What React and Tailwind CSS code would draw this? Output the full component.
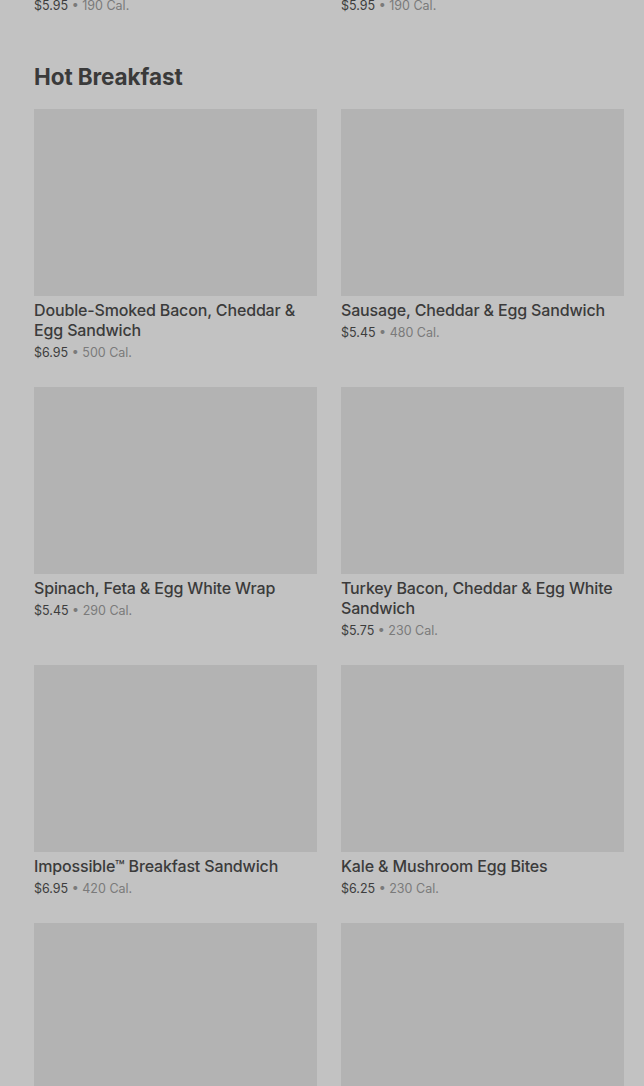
import React from "react";

const items = [
    { name: "Double-Smoked Bacon, Cheddar & Egg Sandwich", price: "$6.95", cal: "500 Cal." },
    { name: "Sausage, Cheddar & Egg Sandwich", price: "$5.45", cal: "480 Cal." },
    { name: "Spinach, Feta & Egg White Wrap", price: "$5.45", cal: "290 Cal." },
    { name: "Turkey Bacon, Cheddar & Egg White Sandwich", price: "$5.75", cal: "230 Cal." },
    { name: "Impossible™ Breakfast Sandwich", price: "$6.95", cal: "420 Cal." },
    { name: "Kale & Mushroom Egg Bites", price: "$6.25", cal: "230 Cal." },
    { name: "Bacon & Gruyère Egg Bites", price: "$5.45", cal: "300 Cal." },
    { name: "Egg White & Roasted Red Pepper Egg Bites", price: "$4.95", cal: "170 Cal." },
];

function Price({ price, cal }) {
    return (
        <div className="mt-[2px] text-[12.5px] leading-[21px]">
            <span className="text-[#3d3d3d]">{price}</span>
            <span className="text-[#7a7a7a]"> • {cal}</span>
        </div>
    );
}

function Card({ item }) {
    return (
        <div className="flex flex-col">
            <div className="h-[187px] bg-[#b3b3b3]" />
            <div className="mt-[4px] text-[16px] leading-[20px] font-medium tracking-[-0.15px] text-[#3b3b3b]">{item.name}</div>
            <Price price={item.price} cal={item.cal} />
        </div>
    );
}

export default function App() {
    return (
        <div className="h-[1086px] overflow-hidden bg-[#c2c2c2] pl-[34px] pr-[20px]" style={{ fontFamily: "Inter, 'Noto Sans', sans-serif" }}>
            <div className="mt-[-7px] grid grid-cols-2 gap-x-[24px]">
                <Price price="$5.95" cal="190 Cal." />
                <Price price="$5.95" cal="190 Cal." />
            </div>
            <h2 className="mt-[47px] text-[22.5px] leading-[28px] font-bold tracking-[-0.1px] text-[#3a3a3a]">Hot Breakfast</h2>
            <div className="mt-[18px] grid grid-cols-2 gap-x-[24px] gap-y-[24px]">
                {items.map((it) => (
                    <Card key={it.name} item={it} />
                ))}
            </div>
        </div>
    );
}
